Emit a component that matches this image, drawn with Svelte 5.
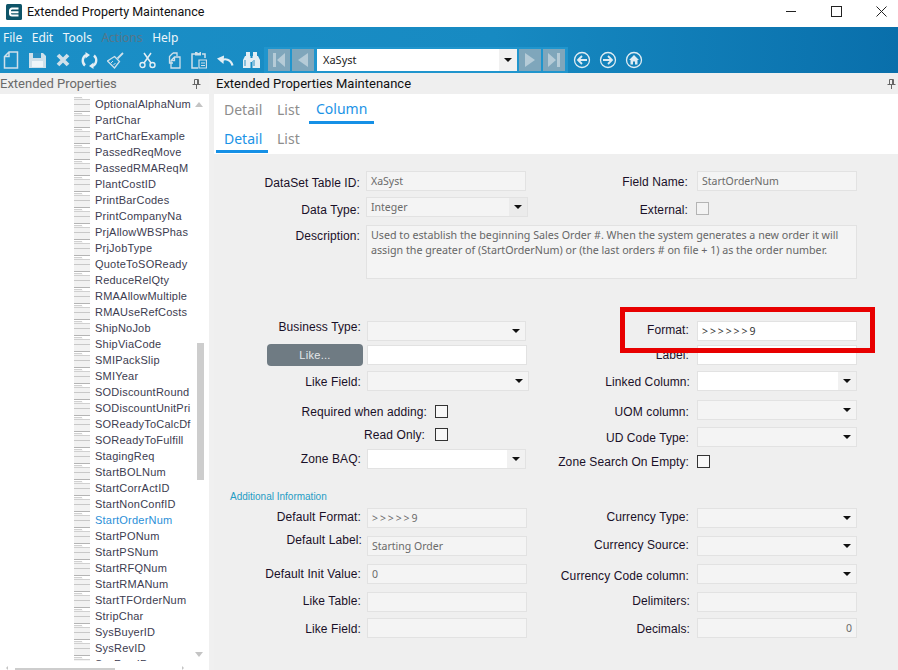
<script>
  const items = ['OptionalAlphaNum','PartChar','PartCharExample','PassedReqMove','PassedRMAReqM','PlantCostID','PrintBarCodes','PrintCompanyNa','PrjAllowWBSPhas','PrjJobType','QuoteToSOReady','ReduceRelQty','RMAAllowMultiple','RMAUseRefCosts','ShipNoJob','ShipViaCode','SMIPackSlip','SMIYear','SODiscountRound','SODiscountUnitPri','SOReadyToCalcDf','SOReadyToFulfill','StagingReq','StartBOLNum','StartCorrActID','StartNonConfID','StartOrderNum','StartPONum','StartPSNum','StartRFQNum','StartRMANum','StartTFOrderNum','StripChar','SysBuyerID','SysRevID','SysRowID'];
  const menus = ['File','Edit','Tools','Actions','Help'];

  // Each row: left field, right field. lr = label's right edge, x = control's left edge, w = control width, ly = label offset
  const L = 214, R = 540;
  const rows = [
    [{ label:'DataSet Table ID:', lr:360, x:366, w:160, ly:4, kind:'input', value:'XaSyst' },
     { label:'Field Name:', lr:688, x:697, w:160, ly:3, kind:'input', value:'StartOrderNum' }],
    [{ label:'Data Type:', lr:360, x:366, w:162, ly:5, kind:'select', value:'Integer', dark:true },
     { label:'External:', lr:688, x:696, ly:5, kind:'check', cy:5, off:true }],
    'desc',
    [{ label:'Business Type:', lr:361, x:367, w:159, ly:-2, kind:'select' },
     { label:'Format:', lr:689, x:697, w:160, ly:1, kind:'input', live:true, value:'>>>>>>9', mono:true }],
    'like',
    [{ label:'Like Field:', lr:361, x:367, w:162, ly:3, kind:'select' },
     { label:'Linked Column:', lr:690, x:697, w:160, ly:3, kind:'select', live:true }],
    [{ label:'Required when adding:', lr:427, x:435, ly:4, kind:'check', cy:5 },
     { label:'UOM column:', lr:689, x:697, w:160, ly:4, kind:'select' }],
    [{ label:'Read Only:', lr:425, x:435, ly:0, kind:'check', cy:1 },
     { label:'UD Code Type:', lr:689, x:697, w:160, ly:3, kind:'select' }],
    [{ label:'Zone BAQ:', lr:361, x:367, w:159, ly:2, kind:'select', live:true },
     { label:'Zone Search On Empty:', lr:689, x:697, ly:5, kind:'check', cy:6 }],
    'info',
    [{ label:'Default Format:', lr:361, x:367, w:160, ly:1, kind:'input', value:'>>>>>9', mono:true },
     { label:'Currency Type:', lr:689, x:697, w:160, ly:1, kind:'select' }],
    [{ label:'Default Label:', lr:362, x:367, w:160, ly:-4, kind:'input', value:'Starting Order' },
     { label:'Currency Source:', lr:689, x:697, w:160, ly:1, kind:'select' }],
    [{ label:'Default Init Value:', lr:361, x:367, w:160, ly:2, kind:'input', value:'0' },
     { label:'Currency Code column:', lr:689, x:697, w:160, ly:4, kind:'select' }],
    [{ label:'Like Table:', lr:361, x:367, w:160, ly:1, kind:'input' },
     { label:'Delimiters:', lr:690, x:697, w:160, ly:1, kind:'input' }],
    [{ label:'Like Field:', lr:361, x:367, w:160, ly:3, kind:'input' },
     { label:'Decimals:', lr:690, x:697, w:160, ly:3, kind:'input', value:'0', num:true }]
  ];
</script>

{#snippet field(f, origin)}
  <div class="field">
    <span class="lbl" style="width:{f.lr - origin}px;margin-top:{f.ly}px">{f.label}</span>
    {#if f.kind === 'check'}
      <span class="check" class:off={f.off} style="margin-left:{f.x - f.lr}px;margin-top:{f.cy}px"></span>
    {:else}
      <span class="ctl" class:live={f.live} class:mono={f.mono} class:num={f.num} style="margin-left:{f.x - f.lr}px;width:{f.w}px">
        <span class="val">{f.value ?? ''}</span>
        {#if f.kind === 'select'}
          <span class="seg" class:dark={f.dark}><i class="arrow"></i></span>
        {/if}
      </span>
    {/if}
  </div>
{/snippet}

<div class="app">
  <header class="title">
    <svg class="logo" width="16" height="16" viewBox="0 0 16 16">
      <rect width="16" height="16" rx="1.500" fill="#0e5468"/>
      <path d="M12.500 8.200H4.200M12.500 4.600H6a2 2 0 0 0-2 2v3a2 2 0 0 0 2 2h6.500" fill="none" stroke="#fff" stroke-width="2"/>
    </svg>
    <span class="title-text">Extended Property Maintenance</span>
    <div class="win">
      <svg width="11" height="11" viewBox="0 0 11 11"><path d="M0 5.500h10" stroke="#222" fill="none"/></svg>
      <svg width="11" height="11" viewBox="0 0 11 11"><rect x=".5" y=".5" width="10" height="10" stroke="#222" fill="none"/></svg>
      <svg width="11" height="11" viewBox="0 0 11 11"><path d="M.5.5l10 10M10.500.5l-10 10" stroke="#222" fill="none"/></svg>
    </div>
  </header>

  <div class="blue">
    <nav class="menu">
      {#each menus as m}
        <span class:dim={m === 'Actions'}>{m}</span>
      {/each}
    </nav>
    <div class="tools">
      <span class="slot"><svg width="16" height="18" viewBox="0 0 16 18"><path d="M6 1h8.500v16h-13V5.500zM6 1v4.500H1.500" fill="none" stroke="#cfe0ea" stroke-width="1.500"/></svg></span>
      <span class="slot"><svg width="17" height="16" viewBox="0 0 17 16"><path d="M0 1h14l3 3v12H0z" fill="#cfe0ea"/><path d="M4 1h8v5H4z" fill="#2a90c4"/><path d="M3 9h11v6H3z" fill="#eef5f9"/></svg></span>
      <span class="slot"><svg width="14" height="14" viewBox="0 0 14 14"><path d="M2 2l10 10M12 2L2 12" stroke="#cfe0ea" stroke-width="3.800"/></svg></span>
      <span class="slot"><svg width="17" height="17" viewBox="0 0 17 17"><path d="M4 13.500A6.500 6.500 0 0 1 5 3M13 3.500A6.500 6.500 0 0 1 12 14" fill="none" stroke="#e3eef4" stroke-width="2.400"/><path d="M4.500 0v6.500L9 3zM12.500 17v-6.500L8 14z" fill="#e3eef4"/></svg></span>
      <span class="slot"><svg width="17" height="17" viewBox="0 0 17 17"><path d="M10.500 6.500L16 1" stroke="#cfe0ea" stroke-width="1.800"/><path d="M7.500 4.500l5 5-5 6.500-7-7z" fill="none" stroke="#cfe0ea" stroke-width="1.300"/><path d="M4 11l2-2M6.500 13l2-2" stroke="#cfe0ea"/></svg></span>
      <span class="slot cut"><svg width="17" height="17" viewBox="0 0 17 17"><circle cx="3.500" cy="13" r="2.500" fill="none" stroke="#e3eef4" stroke-width="1.400"/><circle cx="13.500" cy="13" r="2.500" fill="none" stroke="#e3eef4" stroke-width="1.400"/><path d="M5 11L12 1M12 11L5 1" stroke="#e3eef4" stroke-width="1.500"/></svg></span>
      <span class="slot"><svg width="15" height="17" viewBox="0 0 15 17"><path d="M7 1h4v3M7 1L3.500 4.500V11H7" fill="none" stroke="#cfe0ea" stroke-width="1.300"/><path d="M8.500 5H14v11H5V8.500zM8.500 5v3.500H5" fill="none" stroke="#cfe0ea" stroke-width="1.300"/></svg></span>
      <span class="slot"><svg width="16" height="18" viewBox="0 0 16 18"><path d="M4 3H1v14h6M11 3h3v4" fill="none" stroke="#cfe0ea" stroke-width="1.500"/><path d="M4 1h2.500v1h2V1H10v3.500H4z" fill="#cfe0ea"/><path d="M8 9h7.500v8H8z" fill="none" stroke="#cfe0ea" stroke-width="1.200"/><path d="M10 12h4M10 14.500h4" stroke="#cfe0ea"/></svg></span>
      <span class="slot"><svg width="17" height="12" viewBox="0 0 17 12"><path d="M15.500 11.500C14 5.500 8 3.500 3.500 7" fill="none" stroke="#e3eef4" stroke-width="2.200"/><path d="M0 4.500L7 1.500 6.500 10z" fill="#e3eef4"/></svg></span>
      <span class="slot"><svg width="17" height="16" viewBox="0 0 17 16"><path d="M3 0h4v4H3zM10 0h4v4h-4zM2 4h5.500v12H0V8zM9.500 4H15l2 4v8H9.500zM7.500 6h2v4h-2z" fill="#e3eef4"/><path d="M2 8v6M11 8v6" stroke="#2a90c4"/></svg></span>

      <div class="navgroup">
        <span class="navbtn"><svg width="16" height="16" viewBox="0 0 16 16"><path d="M2 1h3v14H2zM14 1v14L6 8z" fill="#b5cbd7"/></svg></span>
        <span class="navbtn"><svg width="16" height="16" viewBox="0 0 16 16"><path d="M13 1v14L3 8z" fill="#b5cbd7"/></svg></span>
        <span class="combo"><span class="combo-val">XaSyst</span><span class="combo-seg"><i class="arrow"></i></span></span>
        <span class="navbtn"><svg width="16" height="16" viewBox="0 0 16 16"><path d="M3 1v14l10-7z" fill="#b5cbd7"/></svg></span>
        <span class="navbtn"><svg width="16" height="16" viewBox="0 0 16 16"><path d="M2 1v14l8-7zM11 1h3v14h-3z" fill="#b5cbd7"/></svg></span>
      </div>

      <div class="circles">
        <svg width="18" height="18" viewBox="0 0 18 18"><circle cx="9" cy="9" r="7.500" fill="none" stroke="#dfecf3" stroke-width="1.300"/><path d="M14 9H6M9 5L5 9l4 4" fill="none" stroke="#dfecf3" stroke-width="1.800"/></svg>
        <svg width="18" height="18" viewBox="0 0 18 18"><circle cx="9" cy="9" r="7.500" fill="none" stroke="#dfecf3" stroke-width="1.300"/><path d="M4 9h8M9 5l4 4-4 4" fill="none" stroke="#dfecf3" stroke-width="1.800"/></svg>
        <svg width="18" height="18" viewBox="0 0 18 18"><circle cx="9" cy="9" r="7.500" fill="none" stroke="#dfecf3" stroke-width="1.300"/><path d="M9 4L4 9h1.500v4.500h2.500v-3h2v3h2.500V9H14z" fill="#dfecf3"/></svg>
      </div>
    </div>
  </div>

  <div class="panes">
    <aside class="side">
      <div class="head side-head">
        <span>Extended Properties</span>
        <svg class="pin" width="9" height="10" viewBox="0 0 9 10"><path d="M2.500.5h4v5h-4zM.5 5.500h8M4.500 6v4M5.500 1v4" fill="none" stroke="#666"/></svg>
      </div>
      <div class="side-body">
        <ul class="tree">
          {#each items as it}
            <li class:sel={it === 'StartOrderNum'}>
              <svg width="16" height="15" viewBox="0 0 16 15"><path d="M0 0h8l1 2h7v13H0z" fill="#f2f2f2"/><path d="M0 .5h8M0 2.500h16" stroke="#d0d0d0"/><path d="M0 7.500h16" stroke="#c8c8c8"/><path d="M0 14.500h16" stroke="#b4b4b4"/></svg>
              <span>{it}</span>
            </li>
          {/each}
        </ul>
        <div class="vscroll">
          <i class="up"></i>
          <i class="thumb"></i>
          <i class="down"></i>
        </div>
      </div>
      <div class="hscroll"><i class="hl"></i><i class="hthumb"></i><i class="hr"></i></div>
    </aside>

    <main class="main">
      <div class="head main-head">
        <span>Extended Properties Maintenance</span>
        <svg class="pin" width="9" height="10" viewBox="0 0 9 10"><path d="M2.500.5h4v5h-4zM.5 5.500h8M4.500 6v4M5.500 1v4" fill="none" stroke="#666"/></svg>
      </div>
      <div class="tabs">
        <div class="tabrow one">
          <span class="tab t-detail">Detail</span>
          <span class="tab t-list">List</span>
          <span class="tab t-col on">Column</span>
        </div>
        <div class="tabrow two">
          <span class="tab t-d2 on">Detail</span>
          <span class="tab t-l2">List</span>
        </div>
      </div>

      <div class="form">
        {#each rows as row}
          {#if row === 'desc'}
            <div class="wide field">
              <span class="lbl" style="width:{360 - L}px;margin-top:3px">Description:</span>
              <div class="ta">
                <span>Used to establish the beginning Sales Order #. When the system generates a new order it will</span>
                <span>assign the greater of (StartOrderNum) or (the last orders # on file + 1) as the order number.</span>
              </div>
            </div>
          {:else if row === 'like'}
            <div class="field">
              <button class="likebtn">Like...</button>
              <span class="ctl live like-in"></span>
            </div>
            {@render field({ label:'Label:', lr:689, x:697, w:160, ly:2, kind:'input', live:true }, R)}
          {:else if row === 'info'}
            <div class="wide info">Additional Information</div>
          {:else}
            {@render field(row[0], L)}
            {@render field(row[1], R)}
          {/if}
        {/each}

        <div class="redbox"></div>
      </div>
    </main>
  </div>
</div>

<style>
  :global(body) { margin: 0; background: #fff; }
  .app { width: 898px; height: 670px; overflow: hidden; display: flex; flex-direction: column; font-family: "Liberation Sans", Arial, sans-serif; font-size: 12px; color: #1a1028; }
  svg { display: block; flex: none; }

  .title { height: 27px; flex: none; display: flex; align-items: flex-start; background: #fff; }
  .logo { margin: 4px 0 0 6px; }
  .title-text { margin: 3px 0 0 5px; font: 12.5px/18px Roboto, sans-serif; color: #111; }
  .win { margin-left: auto; display: flex; gap: 34px; padding: 6px 11px 0 0; }

  .blue { flex: none; height: 46px; background: linear-gradient(90deg, #1b8fc7 0%, #178ac2 55%, #096fab 100%); }
  .menu { height: 20px; display: flex; gap: 9.5px; padding-left: 3px; font: 12px/22px "Noto Sans", sans-serif; color: #eef6fa; }
  .dim { color: #56768a; }
  .tools { height: 26px; display: flex; align-items: center; }
  .slot { width: 22px; height: 26px; margin-right: 4px; display: flex; align-items: center; justify-content: center; }
  .cut { margin-left: 6px; }
  .navgroup { margin-left: -2px; width: 304px; height: 26px; box-sizing: border-box; padding: 2px 3px 2px 4px; background: #2095cd; display: flex; gap: 2px; }
  .navbtn { width: 22px; height: 22px; background: #7fa6bb; display: flex; align-items: center; justify-content: center; }
  .combo { margin-left: 1px; width: 200px; height: 22px; background: #fff; display: flex; font: 11px/22px "Noto Sans", sans-serif; color: #222; }
  .combo-val { flex: 1; padding-left: 6px; }
  .combo-seg { width: 18px; background: #f1f1f1; display: flex; align-items: center; justify-content: center; }
  .arrow { display: block; width: 0; height: 0; border: 4px solid transparent; border-top: 4px solid #111; border-bottom: 0; }
  .circles { margin-left: 5px; display: flex; gap: 8px; }

  .panes { flex: 1; display: flex; min-height: 0; background: #f0f0f0; }
  .head { height: 21px; flex: none; display: flex; align-items: center; background: #efefef; }
  .pin { margin-left: auto; }

  .side { width: 209px; flex: none; display: flex; flex-direction: column; background: #fff; }
  .side-head { font: 13px/21px Roboto, sans-serif; color: #6a6a6a; padding-right: 8px; }
  .side-body { height: 567px; flex: none; display: flex; overflow: hidden; }
  .tree { list-style: none; margin: 2px 0 0; padding: 0; flex: 1; height: 565px; overflow: hidden; }
  .tree li { height: 16px; display: flex; align-items: center; gap: 5px; padding-left: 74px; font-size: 11px; letter-spacing: .22px; color: #3c3c50; white-space: nowrap; }
  .tree li.sel { color: #2b8fd8; }
  .vscroll { width: 12px; flex: none; position: relative; margin-right: 3px; }
  .up, .down { position: absolute; left: 1px; width: 0; height: 0; border: 4px solid transparent; }
  .up { top: 8px; border-bottom: 5px solid #c4c4c4; border-top: 0; }
  .down { top: 558px; border-top: 5px solid #c4c4c4; border-bottom: 0; }
  .thumb { position: absolute; left: 3px; top: 249px; width: 7px; height: 137px; background: #cdcdcd; }
  .hscroll { flex: 1; position: relative; }
  .hthumb { position: absolute; left: 15px; bottom: 0; width: 100px; height: 2px; background: #cdcdcd; }
  .hl { position: absolute; left: 6px; bottom: 0; border: 2px solid transparent; border-right-color: #c4c4c4; border-left: 0; }
  .hr { position: absolute; left: 182px; bottom: 0; border: 2px solid transparent; border-left-color: #c4c4c4; border-right: 0; }

  .main { flex: 1; margin-left: 5px; display: flex; flex-direction: column; min-width: 0; }
  .main-head { font: 13px/21px Roboto, sans-serif; color: #111; padding: 0 2px 0 2px; }
  .tabs { height: 60px; flex: none; background: #fff; font: 14px/20px "Noto Sans", sans-serif; color: #8d8d8d; }
  .tabrow { position: relative; height: 29px; display: flex; }
  .tab { display: block; height: 20px; margin-top: 6px; }
  .t-detail, .t-d2 { margin-left: 10px; width: 53px; }
  .t-list { width: 39px; }
  .t-l2 { width: 32px; }
  .tab.on { color: #1b93e6; }
  .t-col { position: relative; margin-top: 5px; }
  .t-col::after { content: ""; position: absolute; left: -7px; width: 65px; top: 22px; height: 3px; background: #1590e6; }
  .t-d2::after { content: ""; position: absolute; left: 2px; width: 52px; top: 27px; height: 3px; background: #1590e6; }

  .form { position: relative; flex: 1; box-sizing: border-box; padding-top: 17px; background: #efefef; display: grid; grid-template-columns: 326px 1fr; grid-template-rows: 26px 28px 96px 24px 26px 29px 27px 22px 41px 18px 28px 28px 28px 26px 20px; align-content: start; }
  .field { display: flex; align-items: flex-start; }
  .wide { grid-column: 1 / -1; }
  .lbl { flex: none; box-sizing: border-box; text-align: right; line-height: 16px; white-space: nowrap; font-size: 12px; letter-spacing: .1px; }
  .ctl { flex: none; box-sizing: border-box; height: 20px; border: 1px solid #e2e2e2; background: #f4f4f4; display: flex; font: 10.5px/18px "Noto Sans", sans-serif; color: #6a6a6a; overflow: hidden; }
  .ctl.live { background: #fff; color: #333; }
  .val { flex: 1; padding-left: 4px; white-space: pre; }
  .mono .val { letter-spacing: 1.9px; }
  .num .val { text-align: right; padding-right: 4px; }
  .seg { width: 18px; display: flex; align-items: center; justify-content: center; }
  .live .seg { background: #f1f1f1; }
  .seg.dark { background: #ebebeb; }
  .check { flex: none; box-sizing: border-box; width: 13px; height: 13px; border: 1px solid #333; background: #f8f8f8; }
  .check.off { border-color: #b4b4b4; background: #f3f3f3; }
  .ta { box-sizing: border-box; margin-left: 6px; width: 491px; height: 54px; border: 1px solid #e2e2e2; background: #f4f4f4; padding: 2px 0 0 4px; font: 10.7px/15px "Noto Sans", sans-serif; color: #666; }
  .ta span { display: block; white-space: nowrap; }
  .likebtn { flex: none; margin: -1px 0 0 53px; width: 96px; height: 22px; padding: 0; border: 0; border-radius: 4px; background: #6f7b83; color: #e4e8ea; font: 11px "Liberation Sans", sans-serif; letter-spacing: .3px; }
  .like-in { margin-left: 4px; width: 160px; }
  .info { font-size: 10px; line-height: 14px; color: #1f9cc4; padding-left: 16px; }
  .redbox { position: absolute; left: 406px; top: 153px; width: 255px; height: 46px; box-sizing: border-box; border: 5px solid #e80000; pointer-events: none; }
</style>
